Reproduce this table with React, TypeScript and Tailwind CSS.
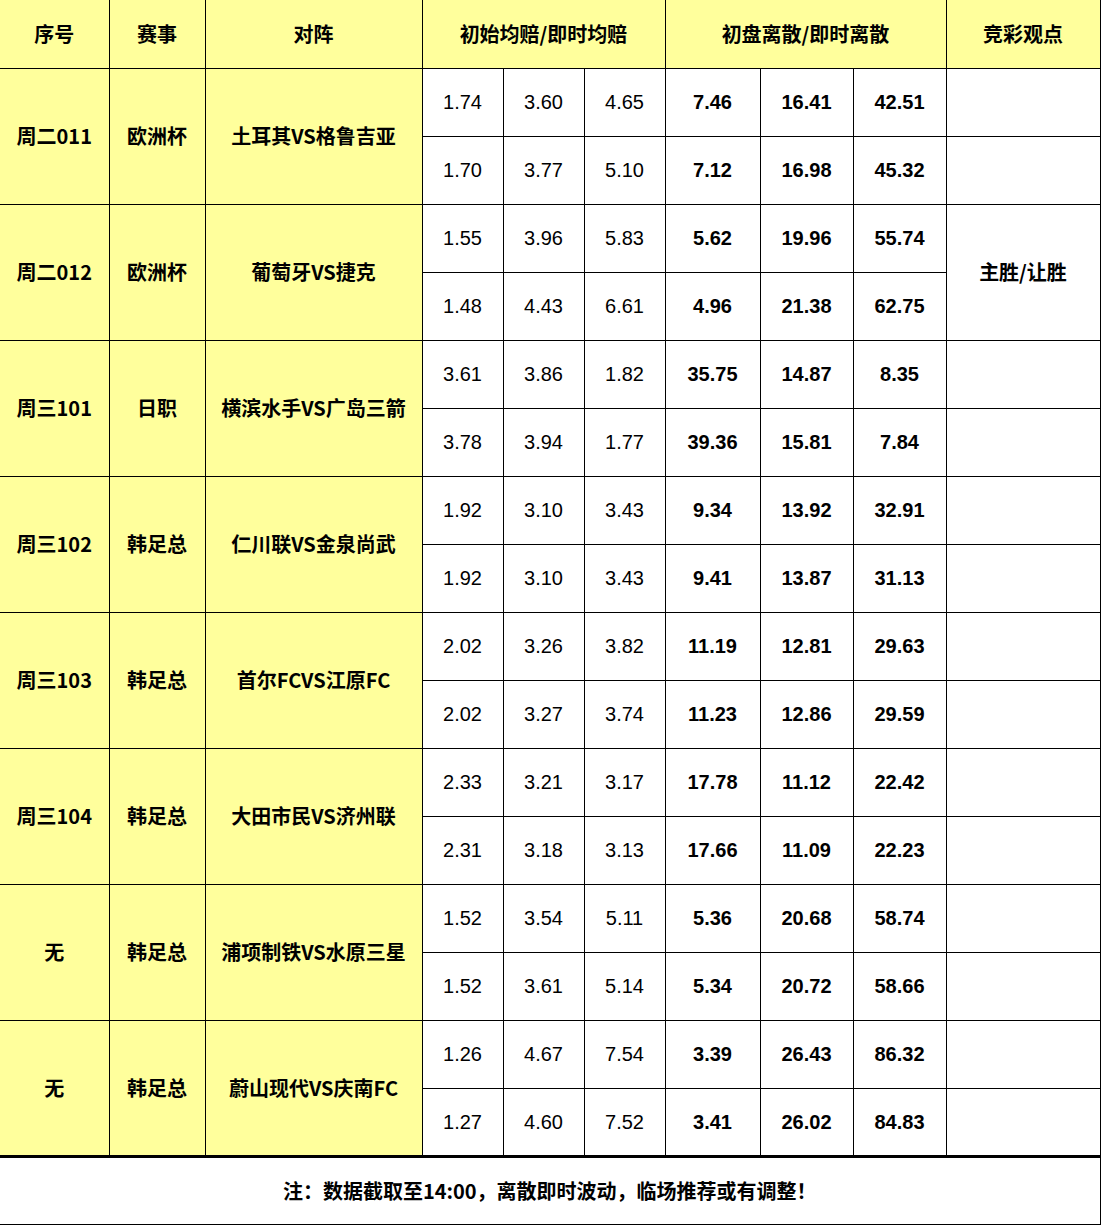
import React from 'react';

type Match = {
  no: string;
  league: string;
  teams: string;
  odds: [string[], string[]];
  disp: [string[], string[]];
  view?: string;
};

const matches: Match[] = [
  { no: '周二011', league: '欧洲杯', teams: '土耳其VS格鲁吉亚', odds: [['1.74', '3.60', '4.65'], ['1.70', '3.77', '5.10']], disp: [['7.46', '16.41', '42.51'], ['7.12', '16.98', '45.32']] },
  { no: '周二012', league: '欧洲杯', teams: '葡萄牙VS捷克', odds: [['1.55', '3.96', '5.83'], ['1.48', '4.43', '6.61']], disp: [['5.62', '19.96', '55.74'], ['4.96', '21.38', '62.75']], view: '主胜/让胜' },
  { no: '周三101', league: '日职', teams: '横滨水手VS广岛三箭', odds: [['3.61', '3.86', '1.82'], ['3.78', '3.94', '1.77']], disp: [['35.75', '14.87', '8.35'], ['39.36', '15.81', '7.84']] },
  { no: '周三102', league: '韩足总', teams: '仁川联VS金泉尚武', odds: [['1.92', '3.10', '3.43'], ['1.92', '3.10', '3.43']], disp: [['9.34', '13.92', '32.91'], ['9.41', '13.87', '31.13']] },
  { no: '周三103', league: '韩足总', teams: '首尔FCVS江原FC', odds: [['2.02', '3.26', '3.82'], ['2.02', '3.27', '3.74']], disp: [['11.19', '12.81', '29.63'], ['11.23', '12.86', '29.59']] },
  { no: '周三104', league: '韩足总', teams: '大田市民VS济州联', odds: [['2.33', '3.21', '3.17'], ['2.31', '3.18', '3.13']], disp: [['17.78', '11.12', '22.42'], ['17.66', '11.09', '22.23']] },
  { no: '无', league: '韩足总', teams: '浦项制铁VS水原三星', odds: [['1.52', '3.54', '5.11'], ['1.52', '3.61', '5.14']], disp: [['5.36', '20.68', '58.74'], ['5.34', '20.72', '58.66']] },
  { no: '无', league: '韩足总', teams: '蔚山现代VS庆南FC', odds: [['1.26', '4.67', '7.54'], ['1.27', '4.60', '7.52']], disp: [['3.39', '26.43', '86.32'], ['3.41', '26.02', '84.83']] },
];

const cjk = { fontFamily: '"Noto Sans CJK SC", "Liberation Sans", sans-serif' };
const num = { fontFamily: '"Liberation Sans", Arial, sans-serif' };

const yellow = 'bg-[#ffff9c] border-r border-b border-black font-bold text-[20px] text-black';
const cell = 'border-r border-b border-black text-[20px] text-black';

export default function App() {
  return (
    <div className="w-[1101px] h-[1225px] bg-white overflow-hidden">
      <table className="w-[1101px] border-collapse table-fixed text-center">
        <colgroup>
          <col className="w-[109px]" />
          <col className="w-[96px]" />
          <col className="w-[217px]" />
          <col className="w-[81px]" />
          <col className="w-[81px]" />
          <col className="w-[81px]" />
          <col className="w-[95px]" />
          <col className="w-[93px]" />
          <col className="w-[93px]" />
          <col className="w-[155px]" />
        </colgroup>
        <thead>
          <tr className="h-[68px]" style={cjk}>
            <th className={yellow}>序号</th>
            <th className={yellow}>赛事</th>
            <th className={yellow}>对阵</th>
            <th className={yellow} colSpan={3}>初始均赔/即时均赔</th>
            <th className={yellow} colSpan={3}>初盘离散/即时离散</th>
            <th className={`${yellow} border-r-[3px]`}>竞彩观点</th>
          </tr>
        </thead>
        <tbody>
          {matches.map((m, i) => (
            <React.Fragment key={i}>
              {[0, 1].map((r) => (
                <tr key={r} className="h-[68px]">
                  {r === 0 && (
                    <>
                      <td rowSpan={2} className={yellow} style={cjk}>{m.no}</td>
                      <td rowSpan={2} className={yellow} style={cjk}>{m.league}</td>
                      <td rowSpan={2} className={yellow} style={cjk}>{m.teams}</td>
                    </>
                  )}
                  {m.odds[r].map((o, k) => (
                    <td key={`o${k}`} className={cell} style={num}>{o}</td>
                  ))}
                  {m.disp[r].map((d, k) => (
                    <td key={`d${k}`} className={`${cell} font-bold`} style={num}>{d}</td>
                  ))}
                  {m.view ? (
                    r === 0 && (
                      <td rowSpan={2} className={`${cell} font-bold border-r-[3px]`} style={cjk}>{m.view}</td>
                    )
                  ) : (
                    <td className={`${cell} border-r-[3px]`} />
                  )}
                </tr>
              ))}
            </React.Fragment>
          ))}
          <tr className="h-[69px]">
            <td colSpan={10} className="border-t-[3px] border-b-[3px] border-r-[3px] border-black font-bold text-[20px] text-black" style={cjk}>
              注：数据截取至14:00，离散即时波动，临场推荐或有调整！
            </td>
          </tr>
        </tbody>
      </table>
    </div>
  );
}
